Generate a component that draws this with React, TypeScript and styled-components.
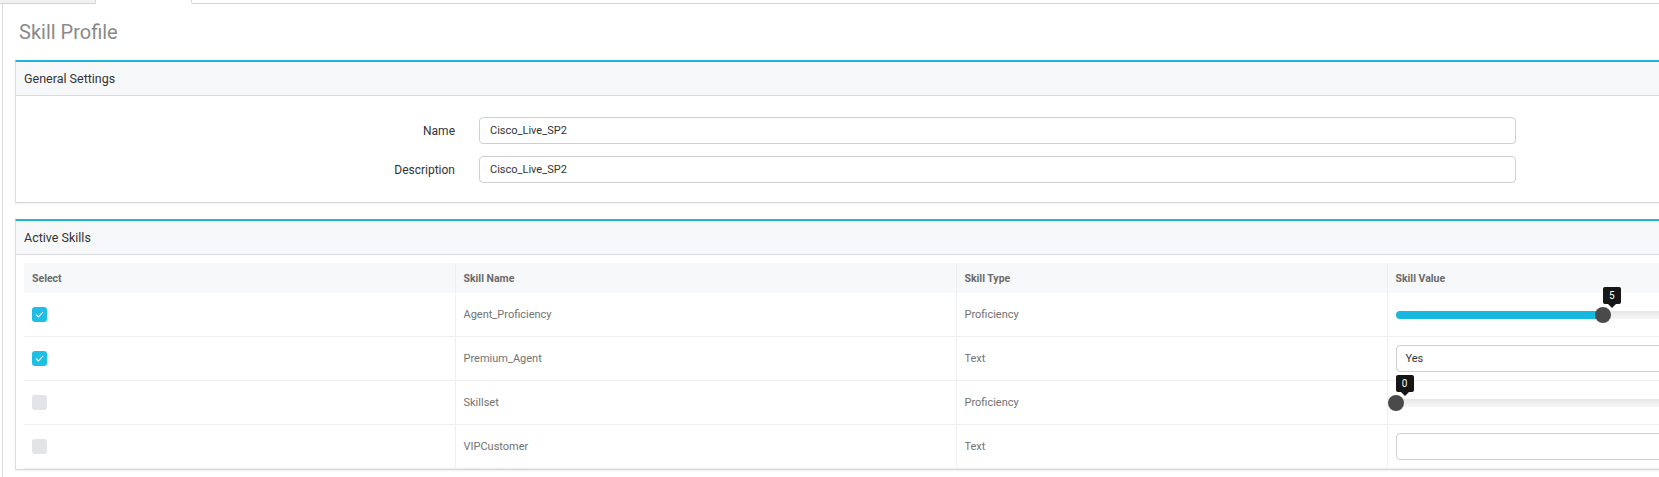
import React from "react"
import styled, { createGlobalStyle } from "styled-components"

const GlobalStyle = createGlobalStyle`
  html, body {
    margin: 0;
    padding: 0;
    overflow: hidden;
    background: #fff;
  }
  body {
    font-family: Roboto, "Liberation Sans", sans-serif;
    color: #333;
  }
`

const skills = [
  { name: "Agent_Proficiency", type: "Proficiency", checked: true, kind: "slider", value: 5 },
  { name: "Premium_Agent", type: "Text", checked: true, kind: "select", value: "Yes" },
  { name: "Skillset", type: "Proficiency", checked: false, kind: "slider", value: 0 },
  { name: "VIPCustomer", type: "Text", checked: false, kind: "text", value: "" },
]

export default function App() {
  return (
    <Page>
      <GlobalStyle />
      <TabStrip>
        <Tab />
        <Tab active />
        <TabFiller />
      </TabStrip>
      <TabContent>
        <Title>Skill Profile</Title>
        <Panel>
          <PanelHeader>General Settings</PanelHeader>
          <FormBody>
            <FormRow>
              <Label>Name</Label>
              <TextInput>Cisco_Live_SP2</TextInput>
            </FormRow>
            <FormRow>
              <Label>Description</Label>
              <TextInput>Cisco_Live_SP2</TextInput>
            </FormRow>
          </FormBody>
        </Panel>
        <Panel>
          <PanelHeader>Active Skills</PanelHeader>
          <TableBody>
            <Table>
              <colgroup>
                <col style={{ width: 431 }} />
                <col style={{ width: 501 }} />
                <col style={{ width: 431 }} />
                <col style={{ width: 431 }} />
              </colgroup>
              <thead>
                <tr>
                  <Th>Select</Th>
                  <Th>Skill Name</Th>
                  <Th>Skill Type</Th>
                  <Th>Skill Value</Th>
                </tr>
              </thead>
              <tbody>
                {skills.map((s) => (
                  <tr key={s.name}>
                    <Td>
                      <Checkbox checked={s.checked}>
                        {s.checked && (
                          <svg width="9" height="7" viewBox="0 0 9 7">
                            <path d="M1 3.6 L3.4 6 L8 1" fill="none" stroke="#fff" strokeWidth="1.1" />
                          </svg>
                        )}
                      </Checkbox>
                    </Td>
                    <Td>{s.name}</Td>
                    <Td>{s.type}</Td>
                    <ValueTd>
                      {s.kind === "slider" && <Slider value={s.value as number} max={10} />}
                      {s.kind === "select" && <ValueBox>{s.value}</ValueBox>}
                      {s.kind === "text" && <ValueBox />}
                    </ValueTd>
                  </tr>
                ))}
              </tbody>
            </Table>
          </TableBody>
        </Panel>
      </TabContent>
    </Page>
  )
}

function Slider({ value, max }: { value: number; max: number }) {
  const pct = (value / max) * 100
  return (
    <Track>
      <Fill style={{ width: `${pct}%` }} />
      <Thumb style={{ left: `${pct}%` }} />
      <Bubble style={{ left: `${pct}%` }}>{value}</Bubble>
    </Track>
  )
}

const Page = styled.div`
  width: 1900px;
`

const TabStrip = styled.div`
  display: flex;
  height: 4px;
`

const Tab = styled.div<{ active?: boolean }>`
  width: 96px;
  box-sizing: border-box;
  background: ${(p) => (p.active ? "#fff" : "#f1f1f1")};
  border-right: 1px solid #d9d9d9;
  border-bottom: 1px solid ${(p) => (p.active ? "transparent" : "#d4d4d4")};
`

const TabFiller = styled.div`
  flex: 1;
  border-bottom: 1px solid #d4d4d4;
`

const TabContent = styled.div`
  margin-left: 2px;
  border-left: 1px solid #dcdcdc;
  padding-left: 12px;
  padding-bottom: 20px;
`

const Title = styled.h1`
  margin: 0;
  padding: 16px 0 16px 4px;
  font-size: 20px;
  line-height: 24px;
  font-weight: 400;
  color: #8a8a8a;
`

const Panel = styled.section`
  border-top: 2px solid #22b5d7;
  border-left: 1px solid #dcdcdc;
  border-bottom: 1px solid #d6d6d6;
  box-shadow: 0 1px 2px rgba(0, 0, 0, 0.06);
  background: #fff;
  margin-bottom: 16px;
`

const PanelHeader = styled.div`
  height: 33px;
  display: flex;
  align-items: center;
  padding-left: 8px;
  background: #f7f8fa;
  border-bottom: 1px solid #d9dbde;
  font-size: 12.5px;
  color: #333;
`

const FormBody = styled.div`
  display: flex;
  flex-direction: column;
  gap: 12px;
  padding: 21px 0 19px;
`

const FormRow = styled.div`
  display: grid;
  grid-template-columns: 439px 1037px;
  column-gap: 24px;
  align-items: center;
`

const Label = styled.div`
  text-align: right;
  font-size: 12px;
  color: #333;
`

const TextInput = styled.div`
  box-sizing: border-box;
  height: 27px;
  border: 1px solid #cfcfcf;
  border-radius: 4px;
  padding-left: 10px;
  display: flex;
  align-items: center;
  font-size: 11px;
  color: #333;
`

const TableBody = styled.div`
  padding: 8px 8px 0;
`

const Table = styled.table`
  table-layout: fixed;
  border-collapse: collapse;
  width: 1794px;
`

const Th = styled.th`
  height: 30px;
  padding: 0 0 0 8px;
  background: #f7f8fa;
  border-left: 1px solid #eceef0;
  text-align: left;
  font-size: 10.5px;
  font-weight: 700;
  color: #6b6b6b;
  &:first-child {
    border-left: none;
  }
`

const Td = styled.td`
  height: 43px;
  padding: 0 0 0 8px;
  border-left: 1px solid #eef0f2;
  border-bottom: 1px solid #eceef0;
  font-size: 11px;
  color: #727272;
  vertical-align: middle;
  &:first-child {
    border-left: none;
  }
`

const ValueTd = styled(Td)`
  padding-right: 8px;
  overflow: visible;
`

const Checkbox = styled.div<{ checked: boolean }>`
  width: 15px;
  height: 15px;
  border-radius: 3px;
  background: ${(p) => (p.checked ? "#1ebfe6" : "#e2e4e7")};
  display: flex;
  align-items: center;
  justify-content: center;
`

const ValueBox = styled.div`
  box-sizing: border-box;
  height: 27px;
  border: 1px solid #cfcfcf;
  border-radius: 4px;
  padding-left: 9px;
  display: flex;
  align-items: center;
  font-size: 11px;
  color: #333;
`

const Track = styled.div`
  position: relative;
  height: 8px;
  border-radius: 4px;
  background: linear-gradient(#e6e6e6, #f6f6f6);
`

const Fill = styled.div`
  height: 100%;
  border-radius: 4px;
  background: #17b9de;
`

const Thumb = styled.div`
  position: absolute;
  top: 50%;
  width: 16px;
  height: 16px;
  margin: -8px 0 0 -8px;
  border-radius: 50%;
  background: #4a4a4a;
`

const Bubble = styled.div`
  position: absolute;
  bottom: 15px;
  min-width: 18px;
  height: 17px;
  border-radius: 2px;
  background: #161616;
  color: #fff;
  font-size: 10px;
  display: flex;
  align-items: center;
  justify-content: center;
  &::after {
    content: "";
    position: absolute;
    left: 50%;
    bottom: -4px;
    margin-left: -4px;
    border-left: 4px solid transparent;
    border-right: 4px solid transparent;
    border-top: 4px solid #161616;
  }
`
